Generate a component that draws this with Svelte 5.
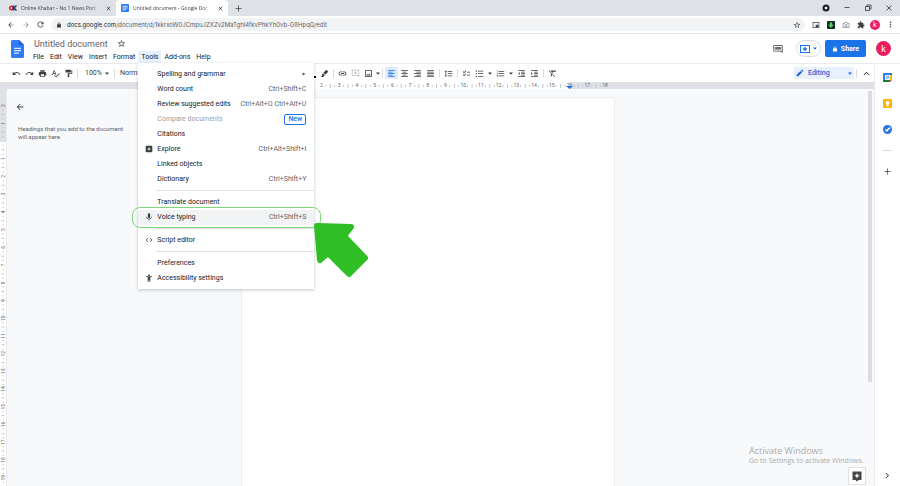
<script>
  const menus = ['File', 'Edit', 'View', 'Insert', 'Format', 'Tools', 'Add-ons', 'Help'];

  const groups = [
    [
      { label: 'Spelling and grammar', sub: true },
      { label: 'Word count', keys: 'Ctrl+Shift+C' },
      { label: 'Review suggested edits', keys: 'Ctrl+Alt+O Ctrl+Alt+U' },
      { label: 'Compare documents', badge: 'New', disabled: true },
      { label: 'Citations' },
      { label: 'Explore', icon: 'explore', keys: 'Ctrl+Alt+Shift+I' },
      { label: 'Linked objects' },
      { label: 'Dictionary', keys: 'Ctrl+Shift+Y' }
    ],
    [
      { label: 'Translate document' },
      { label: 'Voice typing', icon: 'mic', keys: 'Ctrl+Shift+S', active: true }
    ],
    [{ label: 'Script editor', icon: 'code' }],
    [{ label: 'Preferences' }, { label: 'Accessibility settings', icon: 'access' }]
  ];

  // 24-unit icon paths
  const icons = {
    explore: 'M19 2H5a3 3 0 0 0-3 3v14a3 3 0 0 0 3 3h14a3 3 0 0 0 3-3V5a3 3 0 0 0-3-3zm-5.500 11.500L12 18l-1.500-4.500L6 12l4.500-1.500L12 6l1.500 4.500L18 12z',
    mic: 'M12 15a3.500 3.500 0 0 0 3.500-3.500v-7a3.500 3.500 0 0 0-7 0v7A3.500 3.500 0 0 0 12 15zm6-4c0 3.500-2.700 6-6 6s-6-2.500-6-6H4c0 4 3 7.200 7 7.800V23h2v-4.200c4-.6 7-3.800 7-7.800z',
    code: 'M9.400 16.600 4.800 12l4.600-4.600L8 6l-6 6 6 6zm5.200 0 4.600-4.600-4.600-4.600L16 6l6 6-6 6z',
    access: 'M12 1a2.500 2.500 0 1 1 0 5 2.500 2.500 0 0 1 0-5zm9 8h-5v14h-3v-6h-2v6H8V9H3V6.500h18z',
    undo: 'M12.500 8c-2.650 0-5.050 1-6.900 2.600L2 7v9h9l-3.620-3.620A8 8 0 0 1 20.100 16l2.370-.78A10.500 10.500 0 0 0 12.500 8z',
    redo: 'M18.400 10.600A10.500 10.500 0 0 0 1.540 15.220L3.900 16a8 8 0 0 1 12.700-3.620L13 16h9V7z',
    print: 'M19 8H5a3 3 0 0 0-3 3v6h4v4h12v-4h4v-6a3 3 0 0 0-3-3zm-3 11H8v-5h8zm2-16H6v4h12z',
    spell: 'M12.450 16h2.090L9.430 3H7.570L2.460 16h2.090l1.120-3h5.640zm-6.020-5L8.500 5.480 10.570 11zm15.160.59-8.090 8.090L9.830 16l-1.410 1.410 5.090 5.090L23 13z',
    paint: 'M18 4V2H4v7h14V6h2v5H10v11h4v-9h8V4z',
    pen: 'M17 2 9 10l5 5 8-8zM8 11l-3 4 1 2-4 4h6l2-2 3-1z',
    link: 'M3.500 12A3.300 3.300 0 0 1 7 8.900h4V6.500H7a5.500 5.500 0 0 0 0 11h4v-2.400H7A3.300 3.300 0 0 1 3.500 12zM8 13.200h8v-2.400H8zm9-6.700h-4v2.400h4a3.100 3.100 0 0 1 0 6.200h-4v2.400h4a5.500 5.500 0 0 0 0-11z',
    comment: 'M22 2H2v16h16l4 4zm-2 14H4V4h16zM11 6h2v3h3v2h-3v3h-2v-3H8V9h3z',
    image: 'M21 3H3v18h18zM19 19H5V5h14zm-5-7-3 4-2-2.500L6 17h12z',
    left: 'M15 15H3v2h12zm0-8H3v2h12zM3 13h18v-2H3zm0 8h18v-2H3zM3 3v2h18V3z',
    center: 'M7 15v2h10v-2zm-4 6h18v-2H3zm0-8h18v-2H3zm4-6v2h10V7zM3 3v2h18V3z',
    right: 'M3 21h18v-2H3zm6-4h12v-2H9zm-6-4h18v-2H3zm6-4h12V7H9zM3 3v2h18V3z',
    justify: 'M3 21h18v-2H3zm0-4h18v-2H3zm0-4h18v-2H3zm0-4h18V7H3zm0-6v2h18V3z',
    spacing: 'M6 7h2.500L5 3.500 1.500 7H4v10H1.500L5 20.500 8.500 17H6zm4-2v2h12V5zm0 14h12v-2H10zm0-6h12v-2H10z',
    check: 'M22 7h-9v2h9zm0 8h-9v2h9zM5.540 11 2 7.460l1.410-1.410 2.120 2.120 4.240-4.240 1.410 1.410zm0 8L2 15.460l1.410-1.410 2.120 2.120 4.240-4.240 1.410 1.410z',
    bullets: 'M2 4h3v3H2zm0 7h3v3H2zm0 7h3v3H2zM8 4.500h14v2H8zm0 7h14v2H8zm0 7h14v2H8z',
    numbers: 'M2 17h2v.5H3v1h1v.5H2v1h3v-4H2zm1-9h1V4H2v1h1zm-1 3h1.800L2 13.100v.9h3v-1H3.200L5 10.900V10H2zm5-6v2h15V5zm0 14h15v-2H7zm0-6h15v-2H7z',
    outdent: 'M11 17h10v-2H11zm-8-5 4 4V8zm0 9h18v-2H3zM3 3v2h18V3zm8 6h10V7H11zm0 4h10v-2H11z',
    indent: 'M3 21h18v-2H3zM3 8v8l4-4zm8 9h10v-2H11zM3 3v2h18V3zm8 6h10V7H11zm0 4h10v-2H11z',
    clear: 'M3.270 4 2 5.270l7 7L6.500 19h3l1.600-4.700L17.700 21 19 19.700zM6 4v.2L8.800 7h2.400l-.7 1.700 2.100 2.100L14.200 7H21V4z',
    star: 'm22 9.240-7.190-.62L12 2 9.190 8.630 2 9.240l5.460 4.730L5.820 21 12 17.270 18.180 21l-1.630-7.030zM12 15.400l-3.760 2.270 1-4.280-3.320-2.880 4.380-.38L12 6.100l1.710 4.040 4.380.38-3.320 2.880 1 4.280z',
    back: 'M20 11H7.830l5.590-5.590L12 4l-8 8 8 8 1.410-1.410L7.830 13H20z',
    forward: 'm12 4-1.410 1.410L16.170 11H4v2h12.170l-5.580 5.590L12 20l8-8z',
    reload: 'M17.650 6.350A8 8 0 1 0 19.730 14h-2.080A6 6 0 1 1 12 6c1.660 0 3.140.69 4.220 1.780L13 11h7V4z',
    lock: 'M18 9h-1V6.500a5 5 0 0 0-10 0V9H6a2 2 0 0 0-2 2v9a2 2 0 0 0 2 2h12a2 2 0 0 0 2-2v-9a2 2 0 0 0-2-2zM9 6.500a3 3 0 0 1 6 0V9H9z',
    close: 'M19 6.400 17.600 5 12 10.600 6.400 5 5 6.400 10.600 12 5 17.600 6.400 19l5.600-5.600 5.600 5.600 1.400-1.400-5.600-5.600z',
    plus: 'M20 13h-7v7h-2v-7H4v-2h7V4h2v7h7z',
    up: 'm12 7-8 8 1.900 1.900 6.100-6.100 6.100 6.100L20 15z',
    next: 'M8.600 4.600 7 6.200l5.800 5.800L7 17.800l1.600 1.600L16 12z',
    dots: 'M12 8a2 2 0 1 0 0-4 2 2 0 0 0 0 4zm0 2a2 2 0 1 0 0 4 2 2 0 0 0 0-4zm0 6a2 2 0 1 0 0 4 2 2 0 0 0 0-4z',
    pip: 'M22 3H2v18h20zm-2 16H4V5h16zm-1-8h-8v7h8z',
    camera: 'M9 3 7 6H2v15h20V6h-5l-2-3zm11 5v11H4V8h4l2-3h4l2 3zm-8 1a4.500 4.500 0 1 0 0 9 4.500 4.500 0 0 0 0-9zm0 2a2.500 2.500 0 1 1 0 5 2.500 2.500 0 0 1 0-5z',
    puzzle: 'M20.500 11H19V7a2 2 0 0 0-2-2h-4V3.500a2.500 2.500 0 0 0-5 0V5H4a2 2 0 0 0-2 2v3.800h1.500a2.700 2.700 0 0 1 0 5.400H2V20a2 2 0 0 0 2 2h3.800v-1.500a2.700 2.700 0 0 1 5.400 0V22H17a2 2 0 0 0 2-2v-4h1.500a2.500 2.500 0 0 0 0-5z',
    history: 'M1 3v15h18l4 4V3zm20 13.500H3V5h18zM5 7h14v1.800H5zm0 3h14v1.800H5zm0 3h14v1.800H5z',
    edit: 'M2 17.500V22h4.500L18 10.500 13.500 6zM21.500 7a1.500 1.500 0 0 0 0-2L19 2.500a1.500 1.500 0 0 0-2 0L15 4.500 19.500 9z'
  };

  const leftTools = [['undo', 'Undo'], ['redo', 'Redo'], ['print', 'Print'], ['spell', 'Spell check'], ['paint', 'Paint format']];
  const rightTools = [
    ['pen', 'Highlight colour'], '|', ['link', 'Insert link'], ['comment', 'Add comment', 'faint'], ['image', 'Insert image'], 'v', '|',
    ['left', 'Left align', 'on'], ['center', 'Centre align'], ['right', 'Right align'], ['justify', 'Justify'], '|',
    ['spacing', 'Line spacing'], '|', ['check', 'Checklist'], ['bullets', 'Bulleted list'], 'V', ['numbers', 'Numbered list'], 'V',
    ['outdent', 'Decrease indent'], ['indent', 'Increase indent'], '|', ['clear', 'Clear formatting']
  ];

  const pitch = 17.72;
  const hMarks = Array.from({ length: 17 }, (_, i) => i + 2);
  const vMarks = Array.from({ length: 22 }, (_, i) => i - 2);
</script>

{#snippet icon(name, size = 8)}
  <svg width={size} height={size} viewBox="0 0 24 24" aria-hidden="true"><path d={icons[name]} fill="currentColor" fill-rule="evenodd" /></svg>
{/snippet}

{#snippet caret()}
  <svg width="4" height="3" viewBox="0 0 4 3" aria-hidden="true"><path d="M0 .5h4L2 2.800z" fill="currentColor" /></svg>
{/snippet}

<div class="app">
  <div class="tabs">
    <div class="tab first">
      <svg width="8" height="8" viewBox="0 0 16 16" aria-hidden="true"><circle cx="5" cy="8" r="3.500" fill="none" stroke="#d8232a" stroke-width="3" /><path d="M9 3v10M15 3l-5 5 5 5" fill="none" stroke="#163a7c" stroke-width="3" /></svg>
      <span class="name">Online Khabar – No 1 News Port</span>
      <button aria-label="Close tab">{@render icon('close', 7)}</button>
    </div>
    <div class="tab current">
      <svg width="8" height="8" viewBox="0 0 16 16" aria-hidden="true"><rect width="16" height="16" rx="2" fill="#2f7cf6" /><path d="M3 4.500h10M3 8h10M3 11.500h7" stroke="#fff" stroke-width="1.600" /></svg>
      <span class="name">Untitled document - Google Doc</span>
      <button aria-label="Close tab">{@render icon('close', 7)}</button>
    </div>
    <button class="newtab" aria-label="New tab">{@render icon('plus', 9)}</button>
    <div class="win">
      <svg width="8" height="8" viewBox="0 0 8 8" aria-hidden="true"><circle cx="4" cy="4" r="3.500" fill="#202124" /><circle cx="4" cy="4" r="1.300" fill="#fff" /></svg>
      <button aria-label="Minimise"><svg width="8" height="8" viewBox="0 0 8 8"><path d="M1.500 3.500h5" stroke="#333" stroke-width=".8" /></svg></button>
      <button aria-label="Restore"><svg width="8" height="8" viewBox="0 0 8 8"><path d="M1.500 2.500h4v4h-4zM3 2.500V1h4v4H5.500" fill="none" stroke="#333" stroke-width=".8" /></svg></button>
      <button aria-label="Close"><svg width="8" height="8" viewBox="0 0 8 8"><path d="m1.500 1.500 5 5m0-5-5 5" stroke="#333" stroke-width=".8" /></svg></button>
    </div>
  </div>

  <div class="address">
    <button aria-label="Back">{@render icon('back')}</button>
    <button aria-label="Forward" class="dim">{@render icon('forward')}</button>
    <button aria-label="Reload">{@render icon('reload', 9)}</button>
    <div class="omni">
      {@render icon('lock', 6)}
      <span class="url"><b>docs.google.com</b>/document/d/1kkrxoW0JCmpuJZXZv2MaTghl4fkvPhkYh0vb-G8HpqQ/edit</span>
      <button aria-label="Bookmark">{@render icon('star', 8)}</button>
    </div>
    <div class="ext">
      <button aria-label="Picture in picture">{@render icon('pip', 8)}</button>
      <button aria-label="Downloader"><svg width="8" height="8" viewBox="0 0 8 8"><rect width="8" height="8" rx="1" fill="#15262b" /><path d="M2.800 1.200h2.400v2.600H7L4 7 1 3.800h1.800z" fill="#4bd14b" /></svg></button>
      <button aria-label="Screenshot" class="dim">{@render icon('camera', 8)}</button>
      <button aria-label="Extensions">{@render icon('puzzle', 8)}</button>
      <button aria-label="Profile" class="avatar small">k</button>
      <button aria-label="Browser menu">{@render icon('dots', 9)}</button>
    </div>
  </div>

  <header>
    <svg class="logo" width="13" height="18" viewBox="0 0 13 18" aria-hidden="true"><path d="M1.500 0H8l5 5v11.500a1.500 1.500 0 0 1-1.500 1.500h-10A1.500 1.500 0 0 1 0 16.500v-15A1.500 1.500 0 0 1 1.500 0z" fill="#2f7cf6" /><path d="m8 0 5 5H8z" fill="#1a5fd0" /><path d="M3 8.300h7M3 10.700h7M3 13.100h5" stroke="#fff" stroke-width="1" /></svg>
    <div class="titles">
      <div class="title">
        <h1>Untitled document</h1>
        <button aria-label="Star">{@render icon('star', 9)}</button>
      </div>
      <nav>
        {#each menus as m}
          {#if m === 'Tools'}
            <div class="holder">
              <button class="open" aria-expanded="true">{m}</button>
              <div class="menu" role="menu">
                {#each groups as group, i}
                  {#if i}<hr />{/if}
                  {#each group as item}
                    <button role="menuitem" class="row" class:active={item.active} disabled={item.disabled}>
                      <span class="ico">{#if item.icon}{@render icon(item.icon, 8)}{/if}</span>
                      <span class="label">{item.label}</span>
                      {#if item.keys}<span class="keys">{item.keys}</span>{/if}
                      {#if item.badge}<span class="badge">{item.badge}</span>{/if}
                      {#if item.sub}<svg width="4" height="4" viewBox="0 0 4 4" aria-hidden="true"><path d="M.5.500 3.500 2l-3 1.500z" fill="#555" /></svg>{/if}
                      {#if item.active}
                        <span class="ring"></span>
                        <svg class="arrow" width="58" height="58" viewBox="0 0 58 58" aria-hidden="true"><path d="M4 4 38 5 31 14 52 36 36 52 15 31 7 38z" fill="#2fbf24" stroke="#2fbf24" stroke-width="6" stroke-linejoin="round" /></svg>
                      {/if}
                    </button>
                  {/each}
                {/each}
              </div>
            </div>
          {:else}
            <button>{m}</button>
          {/if}
        {/each}
      </nav>
    </div>
    <div class="actions">
      <button aria-label="Comment history" class="history">{@render icon('history', 10)}</button>
      <button aria-label="Present" class="present">
        <svg width="10" height="8" viewBox="0 0 10 8"><rect x=".5" y=".5" width="9" height="7" fill="none" stroke="#1a73e8" /><path d="M5 2v4M3 4h4" stroke="#1a73e8" stroke-width="1.300" /></svg>
        {@render caret()}
      </button>
      <button class="share">{@render icon('lock', 6)}Share</button>
      <button aria-label="Account" class="avatar">k</button>
    </div>
  </header>

  <div class="body">
    <div class="work">
      <div class="toolbar">
        <div class="set">
          {#each leftTools as [name, label]}
            <button class="tool" aria-label={label}>{@render icon(name, 9)}</button>
          {/each}
          <i></i>
          <button class="drop zoom">100%{@render caret()}</button>
          <i></i>
          <button class="drop">Normal text</button>
          <span class="swatch"></span>
        </div>
        <div class="set grow">
          {#each rightTools as t}
            {#if t === '|'}<i></i>
            {:else if t === 'v'}<span class="caret">{@render caret()}</span>
            {:else if t === 'V'}<span class="caret wide">{@render caret()}</span>
            {:else}<button class="tool {t[2] ?? ''}" aria-label={t[1]}>{@render icon(t[0], 9)}</button>{/if}
          {/each}
        </div>
        <button class="mode">{@render icon('edit', 8)}<span>Editing</span>{@render caret()}</button>
        <i></i>
        <button class="fold" aria-label="Hide menus">{@render icon('up', 9)}</button>
      </div>

      <div class="hruler">
        <svg width="100%" height="7" aria-hidden="true">
          <rect x="286" width="283" height="7" fill="#fff" />
          {#each hMarks as n}
            {@const x = 286 + n * pitch}
            <text {x} y="5" text-anchor="middle">{n}</text>
            {#if n < 18}
              <path d="M{x + pitch / 4} 3v2M{x + pitch / 2} 2v4M{x + pitch * 0.75} 3v2" />
            {/if}
          {/each}
          <path class="marker" d="M566 4h7l-3.500 3z" />
        </svg>
      </div>

      <div class="canvas">
        <div class="vruler">
          <svg width="6" height="100%" aria-hidden="true">
            <rect width="6" height="53" fill="#dfe1e6" />
            {#each vMarks as n}
              {@const y = 52 + n * pitch}
              {#if n}<text transform="translate(5 {y}) rotate(-90)" text-anchor="middle">{Math.abs(n)}</text>{/if}
              <path d="M2.500 {y + pitch / 4}h1.500M1.500 {y + pitch / 2}h3M2.500 {y + pitch * 0.75}h1.500" />
            {/each}
          </svg>
        </div>
        <aside>
          <button aria-label="Close outline">{@render icon('back', 10)}</button>
          <p>Headings that you add to the document will appear here.</p>
        </aside>
        <main class="page" aria-label="Document"></main>
        <div class="rest">
          <div class="thumb"></div>
          <p class="wm"><strong>Activate Windows</strong><span>Go to Settings to activate Windows.</span></p>
          <button class="fab" aria-label="Explore"><svg width="10" height="11" viewBox="0 0 20 22"><path d="M2 1h16a1 1 0 0 1 1 1v15a1 1 0 0 1-1 1h-5l-3 3-3-3H2a1 1 0 0 1-1-1V2a1 1 0 0 1 1-1z" fill="#444746" /><path d="m10 4 1.600 4 4 1.600-4 1.600-1.600 4-1.600-4-4-1.600 4-1.600z" fill="#fff" /></svg></button>
        </div>
      </div>
    </div>

    <div class="side">
      <button aria-label="Calendar"><svg width="9" height="9" viewBox="0 0 18 18"><path d="M0 2a2 2 0 0 1 2-2h12v4H4v10H0z" fill="#2f7cf6" /><path d="M14 0h2a2 2 0 0 1 2 2v2h-4z" fill="#1967d2" /><path d="M14 4h4v10h-4z" fill="#fbbc04" /><path d="M4 14h10v4H4z" fill="#188038" /><path d="M0 14h4v4H2a2 2 0 0 1-2-2z" fill="#0b6b2d" /><path d="M14 14h4l-4 4z" fill="#ea4335" /><path d="M4 4h10v10H4z" fill="#fff" /><path d="M6 6h2.500v5H6M10 6.500l1.500-.5v5.500" fill="none" stroke="#2f7cf6" stroke-width="1.300" /></svg></button>
      <button aria-label="Keep"><svg width="9" height="9" viewBox="0 0 18 18"><rect width="18" height="18" rx="2" fill="#fbb605" /><circle cx="9" cy="8" r="4" fill="#fff" /><path d="M7 12h4v3H7z" fill="#fff" /></svg></button>
      <button aria-label="Tasks"><svg width="9" height="9" viewBox="0 0 18 18"><circle cx="9" cy="9" r="9" fill="#2872e8" /><path d="m8 11 5-5" stroke="#fff" stroke-width="3" stroke-linecap="round" /><circle cx="5.500" cy="9.500" r="2" fill="#fbbc04" /><path d="m7 11 1 1" stroke="#fff" stroke-width="3" stroke-linecap="round" /></svg></button>
      <hr />
      <button aria-label="Get add-ons" class="add">{@render icon('plus', 9)}</button>
      <button aria-label="Hide side panel" class="hide">{@render icon('next', 9)}</button>
    </div>
  </div>
</div>

<style>
  :global(body) { margin: 0; }
  .app {
    display: flex; flex-direction: column; height: 100vh; overflow: hidden;
    background: #fff; color: #3c4043;
    font: 7px/8px Roboto, "Liberation Sans", sans-serif;
  }
  button {
    display: flex; align-items: center; justify-content: center; flex: none;
    margin: 0; padding: 0; border: 0; background: none; color: inherit; font: inherit;
  }
  svg { display: block; flex: none; }
  .dim { color: #8a8d91; }

  .tabs { display: flex; height: 16px; background: #dee1e6; font-family: "Open Sans", sans-serif; font-size: 5px; }
  .tab { display: flex; align-items: center; box-sizing: border-box; gap: 4px; width: 112px; padding: 0 4px 0 5px; }
  .tab.first { width: 116px; padding-left: 9px; }
  .current { background: #fff; border-radius: 4px 4px 0 0; }
  .name { flex: 1; white-space: nowrap; mask-image: linear-gradient(90deg, #000 85%, #0004); }
  .newtab { width: 20px; }
  .win { display: flex; align-items: center; gap: 13px; margin-left: auto; padding-right: 7px; }

  .address { display: flex; align-items: center; height: 17px; border-bottom: 1px solid #e3e5e8; padding-left: 6px; gap: 6px; font-family: Inter, sans-serif; font-size: 6px; }
  .address > button { width: 9px; }
  .omni { display: flex; flex: 1; align-items: center; gap: 5px; height: 13px; padding: 0 4px 0 5px; border-radius: 7px; background: #f1f3f4; }
  .url { flex: 1; color: #5f6368; white-space: nowrap; overflow: hidden; }
  .url b { font-weight: 400; color: #202124; }
  .ext { display: flex; align-items: center; margin-left: -3px; padding-right: 2px; }
  .ext button { width: 15px; height: 10px; }

  .avatar { width: 15px; height: 15px; border-radius: 50%; background: #e91e63; color: #fff; font-size: 9px; }
  .ext .avatar { width: 10px; margin: 0 3px 0 2px; font-size: 7px; }

  header { display: flex; align-items: center; height: 29px; padding: 0 9px 0 11px; border-bottom: 1px solid #e8eaed; }
  .titles { flex: 1; margin: 2px 0 0 6px; }
  .title { display: flex; align-items: center; gap: 9px; height: 14px; padding-left: 4px; margin-top: 1px; }
  h1 { margin: 0; font-size: 9px; font-weight: 400; line-height: 12px; color: #5f6368; }
  nav { display: flex; height: 13px; }
  nav > button, .open { height: 12px; padding: 0 3px; color: #202124; }
  .holder { position: relative; }
  .open { background: #e8f0fe; }
  .actions { display: flex; align-items: center; }
  .history { margin-right: 13px; }
  .present { gap: 3px; box-sizing: border-box; width: 25px; height: 17px; margin-right: 4px; border: 1px solid #dadce0; border-radius: 9px; color: #1a73e8; }
  .share { gap: 3px; width: 41px; height: 17px; margin-right: 10px; border-radius: 2px; background: #1a73e8; color: #fff; font-weight: 700; }

  .menu {
    position: absolute; z-index: 2; top: 12px; left: 0; box-sizing: border-box; width: 176px;
    padding: 4px 0 3px; background: #fff; box-shadow: 0 1px 3px rgba(60, 64, 67, .3);
  }
  .row { position: relative; box-sizing: border-box; width: 100%; height: 15px; padding: 0 8px 0 7px; color: #202124; }
  .row:disabled { color: #9aa0a6; }
  .row.active { background: #f1f3f4; }
  .ico { width: 12px; color: #3c4043; }
  .label { flex: 1; text-align: left; white-space: nowrap; }
  .keys { color: #5f6368; white-space: nowrap; }
  .badge { box-sizing: border-box; width: 22px; height: 11px; border: 1px solid #1a73e8; border-radius: 2px; color: #1a73e8; font-weight: 500; line-height: 9px; text-align: center; }
  .menu hr { height: 1px; margin: 3px 0 4px 18px; border: 0; background: #e0e2e5; }
  .ring { position: absolute; inset: -3px -7px -3px -6px; border: 1px solid #7ed87a; border-radius: 8px; }
  .arrow { position: absolute; top: 12px; left: 175px; }

  .body { display: flex; flex: 1; min-height: 0; }
  .work { display: flex; flex: 1; flex-direction: column; min-width: 0; }
  .toolbar { display: flex; align-items: center; height: 18px; padding-left: 10px; }
  .set { display: flex; align-items: center; width: 308px; }
  .set.grow { flex: 1; width: auto; }
  .toolbar i { flex: none; width: 1px; height: 9px; margin: 0 2px; background: #dadce0; }
  .tool { width: 13px; height: 12px; }
  .on { border-radius: 1px; background: #e0ecfd; color: #1a73e8; }
  .faint { color: #b5b8bc; }
  .drop { padding: 0 3px; }
  .zoom { gap: 3px; padding-left: 5px; }
  .swatch { width: 4px; height: 2px; margin: 8px 2px 0 auto; background: #000; }
  .caret { display: flex; justify-content: center; width: 5px; }
  .wide { width: 8px; }
  .mode { justify-content: flex-start; gap: 4px; box-sizing: border-box; width: 60px; height: 12px; padding: 0 2px; border-radius: 1px; background: #e8f0fe; color: #1967d2; font-weight: 500; }
  .mode span { flex: 1; text-align: left; }
  .fold { width: 15px; }

  .hruler { height: 7px; background: #dfe1e6; }
  .hruler path, .vruler path { stroke: #c3c6ca; stroke-width: 1; }
  .hruler text, .vruler text { fill: #5f6368; font-size: 5px; }
  .hruler .marker { fill: #1a73e8; stroke: none; }

  .canvas { display: flex; flex: 1; min-height: 0; background: #f8f9fa; }
  .vruler { width: 6px; background: #fff; border-right: 1px solid #e8eaed; }
  aside { flex: none; width: 117px; padding: 13px 0 0 8px; margin-right: 109px; }
  aside button { width: 10px; }
  aside p { margin: 13px 0 0 3px; color: #5f6368; font-size: 6px; }
  .page { flex: none; box-sizing: border-box; width: 374px; margin-top: 8px; border: 1px solid #eceef0; border-bottom: 0; background: #fff; }
  .rest { display: flex; flex: 1; flex-direction: column; align-items: flex-end; }
  .thumb { width: 4px; height: 291px; margin: 2px 2px 0 0; background: #dadce0; }
  .wm { display: flex; flex-direction: column; margin: auto 12px 2px 0; width: 113px; color: #a9acb0; font-family: "Open Sans", sans-serif; white-space: nowrap; }
  .wm strong { font-size: 9px; font-weight: 400; line-height: 12px; }
  .fab { box-sizing: border-box; width: 18px; height: 18px; margin: 0 8px 1px 0; border: 1px solid #e0e2e5; background: #fff; }

  .side { display: flex; flex-direction: column; align-items: center; box-sizing: border-box; width: 26px; padding: 9px 0 6px; border-left: 1px solid #e8eaed; }
  .side button { height: 9px; margin-bottom: 17px; }
  .side hr { width: 9px; height: 1px; margin: -1px 0 16px; border: 0; background: #dadce0; }
  .side .hide { margin: auto 0 0; }
</style>
